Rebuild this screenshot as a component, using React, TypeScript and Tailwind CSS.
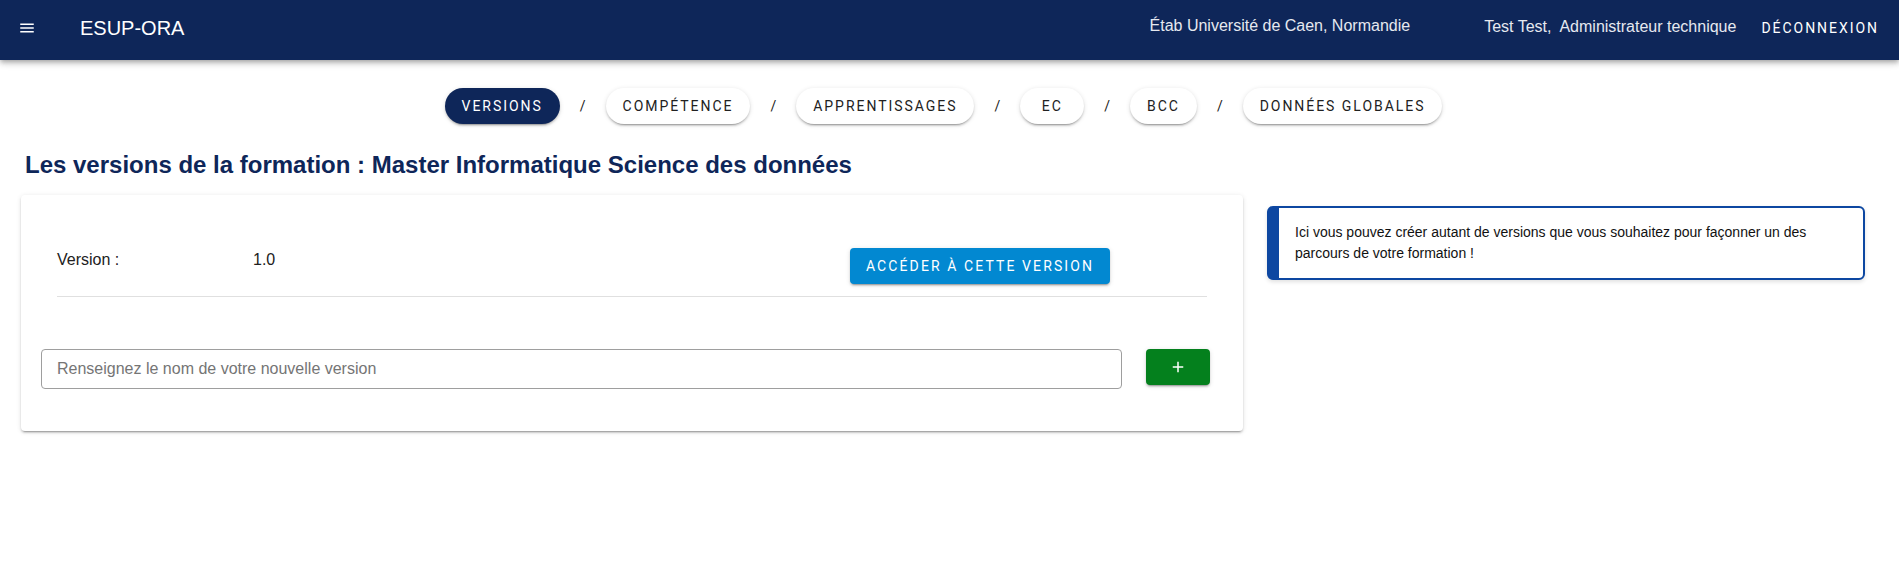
import React from "react";

const pills = ["VERSIONS", "COMPÉTENCE", "APPRENTISSAGES", "EC", "BCC", "DONNÉES GLOBALES"];

export default function App() {
  return (
    <div className="min-h-[576px] bg-white font-['Liberation_Sans',Arial,sans-serif] text-[#212121]">
      <header className="relative z-10 flex h-[60px] items-center bg-[#0e2659] pb-[4px] text-white shadow-[0_2px_4px_-1px_rgba(0,0,0,0.2),0_4px_5px_0_rgba(0,0,0,0.14),0_1px_10px_0_rgba(0,0,0,0.12)]">
        <div className="ml-[18px] flex h-[18px] w-[18px] items-center justify-center">
          <svg width="18" height="18" viewBox="0 0 24 24" fill="white">
            <path d="M3,6H21V8H3V6M3,11H21V13H3V11M3,16H21V18H3V16Z" />
          </svg>
        </div>
        <div className="ml-[44px] text-[20px] leading-7">ESUP-ORA</div>
        <div className="ml-auto -mt-[4px] text-[16px] leading-6 text-[#e6e9f0]">Étab Université de Caen, Normandie</div>
        <div className="ml-[74px] -mt-[3px] text-[16px] leading-6 text-[#e6e9f0] whitespace-pre">Test Test,  Administrateur technique</div>
        <div className="ml-[25px] mr-[20px] font-['Roboto',sans-serif] text-[14px] font-normal tracking-[0.14em]">DÉCONNEXION</div>
      </header>

      <nav className="mt-[28px] flex items-center justify-center pr-[12px]">
        {pills.map((p, i) => (
          <React.Fragment key={p}>
            {i > 0 && <span className="mx-[20px] font-['Roboto',sans-serif] text-[14px] text-[#212121]">/</span>}
            <div
              className={
                "flex h-9 min-w-[64px] items-center justify-center rounded-full px-[17px] font-['Roboto',sans-serif] text-[14px] font-normal tracking-[0.14em] shadow-[0_3px_1px_-2px_rgba(0,0,0,0.2),0_2px_2px_0_rgba(0,0,0,0.14),0_1px_5px_0_rgba(0,0,0,0.12)] " +
                (i === 0 ? "bg-[#0e2659] text-white" : "bg-white text-[#212121]")
              }
            >
              {p}
            </div>
          </React.Fragment>
        ))}
      </nav>

      <h1 className="ml-[25px] mt-[25px] text-[24px] font-bold leading-[32px] text-[#0e2659]">
        Les versions de la formation : Master Informatique Science des données
      </h1>

      <div className="mt-[14px] flex items-start">
        <div className="ml-[21px] w-[1222px] rounded bg-white pb-[42px] pt-[53px] shadow-[0_3px_1px_-2px_rgba(0,0,0,0.2),0_2px_2px_0_rgba(0,0,0,0.14),0_1px_5px_0_rgba(0,0,0,0.12)]">
          <div className="mx-[36px] flex items-start">
            <div className="w-[196px] text-[16px] leading-6">Version :</div>
            <div className="flex-1 text-[16px] leading-6">1.0</div>
            <button className="mr-[97px] flex h-9 w-[260px] items-center justify-center rounded bg-[#0288d1] font-['Roboto',sans-serif] text-[14px] font-normal tracking-[0.15em] text-white shadow-[0_3px_1px_-2px_rgba(0,0,0,0.2),0_2px_2px_0_rgba(0,0,0,0.14),0_1px_5px_0_rgba(0,0,0,0.12)]">
              ACCÉDER À CETTE VERSION
            </button>
          </div>
          <div className="mx-[36px] mt-[12px] border-t border-[#e0e0e0]" />
          <div className="mt-[52px] flex items-start pl-[20px]">
            <input
              className="h-10 w-[1081px] rounded border border-[#9e9e9e] px-[15px] text-[16px] text-[#212121] outline-none placeholder:text-[#757575]"
              placeholder="Renseignez le nom de votre nouvelle version"
            />
            <button className="ml-[24px] flex h-9 w-[64px] items-center justify-center rounded bg-[#04801d] text-white shadow-[0_3px_1px_-2px_rgba(0,0,0,0.2),0_2px_2px_0_rgba(0,0,0,0.14),0_1px_5px_0_rgba(0,0,0,0.12)]">
              <svg width="18" height="18" viewBox="0 0 24 24" fill="white">
                <path d="M19,13H13V19H11V13H5V11H11V5H13V11H19V13Z" />
              </svg>
            </button>
          </div>
        </div>

        <div className="ml-[24px] mt-[11px] w-[598px] rounded-md border-2 border-l-[12px] border-[#0d47a1] bg-white py-[14px] pl-[16px] pr-[20px] text-[14px] leading-[21px] text-[#111] shadow-[0_2px_4px_rgba(0,0,0,0.12)]">
          Ici vous pouvez créer autant de versions que vous souhaitez pour façonner un des parcours de votre formation !
        </div>
      </div>
    </div>
  );
}
